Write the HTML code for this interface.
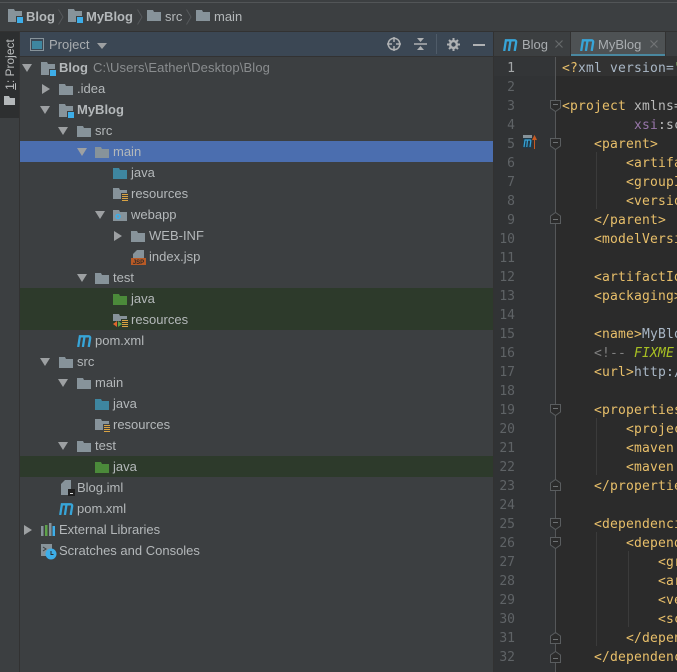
<!DOCTYPE html>
<html><head><meta charset="utf-8">
<style>
html,body{margin:0;padding:0;background:#3c3f41;}
#p{position:relative;width:677px;height:672px;overflow:hidden;background:#3c3f41;font-family:"Liberation Sans",sans-serif;font-size:13px;color:#b4b8ba;}
#p div,#p span.a,#p svg.a{position:absolute;}
.t{white-space:pre;line-height:21px;height:21px;}
.b{font-weight:bold;color:#b4b8ba;}
.c{white-space:pre;font-family:"DejaVu Sans Mono","Liberation Mono",monospace;font-size:13px;letter-spacing:.17px;line-height:19px;height:19px;left:562px;color:#e8bf6a;margin-top:2px;}
.n{left:494px;width:21px;text-align:right;font-family:"DejaVu Sans Mono","Liberation Mono",monospace;font-size:13px;line-height:19px;height:19px;color:#5f6366;margin-top:2px;}
i{font-style:normal;}
</style></head><body>
<div id="p">
<svg width="0" height="0" style="position:absolute">
<defs>
<symbol id="f" viewBox="0 0 14 11"><path d="M0 0H6L7 2H14V11H0Z" fill="#87939a"/></symbol>
<symbol id="fb" viewBox="0 0 14 11"><path d="M0 0H6L7 2H14V11H0Z" fill="#3e86a0"/></symbol>
<symbol id="fg" viewBox="0 0 14 11"><path d="M0 0H6L7 2H14V11H0Z" fill="#4b8a3a"/></symbol>
<symbol id="mod" viewBox="0 0 15 15"><path d="M0 0H6L7 2H14V7H8V13H0Z" fill="#87939a"/><rect x="9" y="8" width="6" height="6" fill="#3daee9"/></symbol>
<symbol id="res" viewBox="0 0 15 15"><path d="M0 0H6L7 2H14V5H8V11H0Z" fill="#87939a"/><path d="M9 6.500H15M9 8.500H15M9 10.500H15M9 12.500H15" stroke="#d9a343" stroke-width="1"/></symbol>
<symbol id="down" viewBox="0 0 10 8"><path d="M0 0H10L5 8Z" fill="#9da0a2"/></symbol>
<symbol id="right" viewBox="0 0 8 10"><path d="M0 0V10L8 5Z" fill="#9da0a2"/></symbol>
<symbol id="fold" viewBox="0 0 11 12"><path d="M.5 .5H10.500V8L5.500 11.500L.5 8Z" fill="#2b2b2b" stroke="#5a5d5f"/><path d="M3 4.500H8" stroke="#6e7173"/></symbol>
<symbol id="foldu" viewBox="0 0 11 12"><path d="M.5 11.500H10.500V4L5.500 .5L.5 4Z" fill="#2b2b2b" stroke="#5a5d5f"/><path d="M3 7.500H8" stroke="#6e7173"/></symbol>
<symbol id="mv" viewBox="0 0 15 12"><path d="M1.200 12L2.900 1.300H11.500Q13.500 1.300 13.100 3.600L11.700 12M7.500 1.500L5.900 12" fill="none" stroke="#37a5d8" stroke-width="2.300"/></symbol>
</defs>
</svg>

<!-- top bar -->
<div style="left:0;top:0;width:677px;height:31px;background:#3c3f41;"></div>
<div style="left:0;top:2px;width:677px;height:1px;background:#525557;"></div>
<div style="left:0;top:31px;width:677px;height:1px;background:#323232;"></div>
<svg class="a" style="left:8px;top:9px" width="15" height="15"><use href="#mod"/></svg>
<div class="t b" style="left:26px;top:6px;">Blog</div>
<svg class="a" style="left:58px;top:9px" width="6" height="16"><path d="M.5 .5L5 8L.5 15.500" fill="none" stroke="#55585a"/></svg>
<svg class="a" style="left:68px;top:9px" width="15" height="15"><use href="#mod"/></svg>
<div class="t b" style="left:86px;top:6px;">MyBlog</div>
<svg class="a" style="left:137px;top:9px" width="6" height="16"><path d="M.5 .5L5 8L.5 15.500" fill="none" stroke="#55585a"/></svg>
<svg class="a" style="left:147px;top:10px" width="14" height="11"><use href="#f"/></svg>
<div class="t" style="left:165px;top:6px;">src</div>
<svg class="a" style="left:186px;top:9px" width="6" height="16"><path d="M.5 .5L5 8L.5 15.500" fill="none" stroke="#55585a"/></svg>
<svg class="a" style="left:196px;top:10px" width="14" height="11"><use href="#f"/></svg>
<div class="t" style="left:214px;top:6px;">main</div>

<!-- side stripe -->
<div style="left:19px;top:32px;width:1px;height:640px;background:#323232;"></div>
<div style="left:0;top:32px;width:19px;height:86px;background:#2d2f30;"></div>
<div class="t" style="left:0;top:32px;width:19px;height:55px;"><span class="a" style="left:-17px;top:22px;width:55px;text-align:center;transform:rotate(-90deg);color:#bbbdbe;font-size:12px;line-height:21px;"><u>1</u>: Project</span></div>
<svg class="a" style="left:4px;top:96px" width="11" height="9"><path d="M0 0H5L6 2H11V9H0Z" fill="#b4b8ba"/></svg>

<!-- project header -->
<div style="left:20px;top:32px;width:473px;height:24px;background:#3b4754;"></div>
<div style="left:20px;top:56px;width:473px;height:1px;background:#323232;"></div>
<svg class="a" style="left:30px;top:38px" width="14" height="13"><rect x=".5" y=".5" width="13" height="12" fill="none" stroke="#87939a"/><rect x="2" y="3" width="10" height="8" fill="#3e86a0"/></svg>
<div class="t" style="left:49px;top:34px;color:#a9adb0;">Project</div>
<svg class="a" style="left:97px;top:43px" width="10" height="6"><path d="M0 0H10L5 6Z" fill="#9da0a2"/></svg>
<svg class="a" style="left:387px;top:37px" width="14" height="14"><circle cx="7" cy="7" r="5.800" fill="none" stroke="#afb1b3" stroke-width="1.500"/><path d="M7 0V5M7 9V14M0 7H5M9 7H14" stroke="#afb1b3" stroke-width="1.500"/></svg>
<svg class="a" style="left:414px;top:37px" width="13" height="14"><path d="M0 7H13" stroke="#afb1b3" stroke-width="1.500"/><path d="M3 1H10L6.500 5ZM3 13H10L6.500 9Z" fill="#afb1b3"/></svg>
<div style="left:436px;top:34px;width:1px;height:20px;background:#4f5b68;"></div>
<svg class="a" style="left:447px;top:38px" width="13" height="13"><circle cx="6.500" cy="6.500" r="3.400" fill="none" stroke="#afb1b3" stroke-width="2.400"/><path d="M6.500 0V3M6.500 10V13M0 6.500H3M10 6.500H13M2 2L4 4M9 9L11 11M11 2L9 4M4 9L2 11" stroke="#afb1b3" stroke-width="2"/></svg>
<div style="left:473px;top:44px;width:12px;height:2px;background:#afb1b3;"></div>

<!-- tree backgrounds -->
<div style="left:20px;top:141px;width:473px;height:21px;background:#4b6eaf;"></div>
<div style="left:20px;top:288px;width:473px;height:42px;background:#2d3a2b;"></div>
<div style="left:20px;top:456px;width:473px;height:21px;background:#2d3a2b;"></div>

<!-- tree rows -->
<svg class="a" style="left:22px;top:64px" width="10" height="8"><use href="#down"/></svg>
<svg class="a" style="left:41px;top:62px" width="15" height="15"><use href="#mod"/></svg>
<div class="t b" style="left:59px;top:57px;">Blog</div>
<div class="t" style="left:93px;top:57px;color:#8a8d8f;letter-spacing:.13px;">C:\Users\Eather\Desktop\Blog</div>

<svg class="a" style="left:42px;top:84px" width="8" height="10"><use href="#right"/></svg>
<svg class="a" style="left:59px;top:84px" width="14" height="11"><use href="#f"/></svg>
<div class="t" style="left:77px;top:78px;">.idea</div>

<svg class="a" style="left:40px;top:106px" width="10" height="8"><use href="#down"/></svg>
<svg class="a" style="left:59px;top:104px" width="15" height="15"><use href="#mod"/></svg>
<div class="t b" style="left:77px;top:99px;">MyBlog</div>

<svg class="a" style="left:58px;top:127px" width="10" height="8"><use href="#down"/></svg>
<svg class="a" style="left:77px;top:126px" width="14" height="11"><use href="#f"/></svg>
<div class="t" style="left:95px;top:120px;">src</div>

<svg class="a" style="left:77px;top:148px" width="10" height="8"><use href="#down"/></svg>
<svg class="a" style="left:95px;top:147px" width="14" height="11"><use href="#f"/></svg>
<div class="t" style="left:113px;top:141px;">main</div>

<svg class="a" style="left:113px;top:168px" width="14" height="11"><use href="#fb"/></svg>
<div class="t" style="left:131px;top:162px;">java</div>

<svg class="a" style="left:113px;top:188px" width="15" height="15"><use href="#res"/></svg>
<div class="t" style="left:131px;top:183px;">resources</div>

<svg class="a" style="left:95px;top:211px" width="10" height="8"><use href="#down"/></svg>
<svg class="a" style="left:113px;top:210px" width="14" height="11"><path d="M0 0H6L7 2H14V11H0Z" fill="#87939a"/><circle cx="5" cy="6.500" r="2" fill="none" stroke="#3daee9" stroke-width="1.500"/></svg>
<div class="t" style="left:131px;top:204px;">webapp</div>

<svg class="a" style="left:114px;top:231px" width="8" height="10"><use href="#right"/></svg>
<svg class="a" style="left:131px;top:231px" width="14" height="11"><use href="#f"/></svg>
<div class="t" style="left:149px;top:225px;">WEB-INF</div>

<svg class="a" style="left:131px;top:250px" width="15" height="15"><path d="M6 0H13V9H2V4Z" fill="#87939a"/><rect x="0" y="8" width="15" height="7" fill="#b85a26"/><text x="7.500" y="14" font-family="Liberation Sans" font-size="6" font-weight="bold" text-anchor="middle" fill="#2b2b2b">JSP</text></svg>
<div class="t" style="left:149px;top:246px;">index.jsp</div>

<svg class="a" style="left:77px;top:274px" width="10" height="8"><use href="#down"/></svg>
<svg class="a" style="left:95px;top:273px" width="14" height="11"><use href="#f"/></svg>
<div class="t" style="left:113px;top:267px;">test</div>

<svg class="a" style="left:113px;top:294px" width="14" height="11"><use href="#fg"/></svg>
<div class="t" style="left:131px;top:288px;">java</div>

<svg class="a" style="left:113px;top:314px" width="15" height="15"><path d="M0 0H6L7 2H14V5H8V7H0Z" fill="#87939a"/><path d="M0 10L4 7V13Z" fill="#e0662c"/><path d="M5 7V13L9 10Z" fill="#5ea34a"/><path d="M9 6.500H15M9 8.500H15M9 10.500H15M9 12.500H15" stroke="#d9a343"/></svg>
<div class="t" style="left:131px;top:309px;">resources</div>

<svg class="a" style="left:77px;top:335px" width="15" height="12"><use href="#mv"/></svg>
<div class="t" style="left:95px;top:330px;">pom.xml</div>

<svg class="a" style="left:40px;top:358px" width="10" height="8"><use href="#down"/></svg>
<svg class="a" style="left:59px;top:357px" width="14" height="11"><use href="#f"/></svg>
<div class="t" style="left:77px;top:351px;">src</div>

<svg class="a" style="left:58px;top:379px" width="10" height="8"><use href="#down"/></svg>
<svg class="a" style="left:77px;top:378px" width="14" height="11"><use href="#f"/></svg>
<div class="t" style="left:95px;top:372px;">main</div>

<svg class="a" style="left:95px;top:399px" width="14" height="11"><use href="#fb"/></svg>
<div class="t" style="left:113px;top:393px;">java</div>

<svg class="a" style="left:95px;top:419px" width="15" height="15"><use href="#res"/></svg>
<div class="t" style="left:113px;top:414px;">resources</div>

<svg class="a" style="left:58px;top:442px" width="10" height="8"><use href="#down"/></svg>
<svg class="a" style="left:77px;top:441px" width="14" height="11"><use href="#f"/></svg>
<div class="t" style="left:95px;top:435px;">test</div>

<svg class="a" style="left:95px;top:462px" width="14" height="11"><use href="#fg"/></svg>
<div class="t" style="left:113px;top:456px;">java</div>

<svg class="a" style="left:61px;top:480px" width="14" height="16"><path d="M4 0H10V15H0V4Z" fill="#87939a"/><rect x="7" y="9" width="7" height="7" fill="#1f1f1f"/><rect x="9" y="13" width="3" height="1" fill="#ddd"/></svg>
<div class="t" style="left:77px;top:477px;">Blog.iml</div>

<svg class="a" style="left:59px;top:503px" width="15" height="12"><use href="#mv"/></svg>
<div class="t" style="left:77px;top:498px;">pom.xml</div>

<svg class="a" style="left:24px;top:525px" width="8" height="10"><use href="#right"/></svg>
<svg class="a" style="left:41px;top:523px" width="14" height="13"><rect x="0" y="3" width="2.500" height="10" fill="#87939a"/><rect x="4" y="2" width="2.500" height="11" fill="#5ea34a"/><rect x="8" y="0" width="2.500" height="13" fill="#87939a"/><rect x="11.500" y="3" width="2.500" height="10" fill="#3daee9"/></svg>
<div class="t" style="left:59px;top:519px;">External Libraries</div>

<svg class="a" style="left:41px;top:544px" width="16" height="16"><rect x="0" y="0" width="11" height="12" fill="#87939a"/><path d="M2 3L5 5L2 7" fill="none" stroke="#3c3f41"/><circle cx="10" cy="10" r="5.500" fill="#3daee9"/><path d="M10 7V10.500H12.500" fill="none" stroke="#2b2b2b"/></svg>
<div class="t" style="left:59px;top:540px;">Scratches and Consoles</div>

<!-- tabs -->
<div style="left:493px;top:32px;width:1px;height:640px;background:#323232;"></div>
<div style="left:494px;top:32px;width:183px;height:24px;background:#3c3f41;"></div>
<div style="left:571px;top:32px;width:94px;height:22px;background:#4e5254;"></div>
<div style="left:571px;top:54px;width:94px;height:3px;background:#4a88a0;"></div>
<div style="left:494px;top:56px;width:183px;height:1px;background:#323232;"></div>
<div style="left:570px;top:32px;width:1px;height:24px;background:#323232;"></div>
<div style="left:665px;top:32px;width:1px;height:24px;background:#323232;"></div>
<svg class="a" style="left:503px;top:39px" width="15" height="12"><use href="#mv"/></svg>
<div class="t" style="left:522px;top:34px;color:#a9adb0;">Blog</div>
<svg class="a" style="left:555px;top:40px" width="8" height="8"><path d="M.5 .5L7.500 7.500M7.500 .5L.5 7.500" stroke="#66696b" stroke-width="1.200"/></svg>
<svg class="a" style="left:580px;top:39px" width="15" height="12"><use href="#mv"/></svg>
<div class="t" style="left:598px;top:34px;color:#a9adb0;">MyBlog</div>
<svg class="a" style="left:650px;top:40px" width="8" height="8"><path d="M.5 .5L7.500 7.500M7.500 .5L.5 7.500" stroke="#717476" stroke-width="1.200"/></svg>

<!-- editor -->
<div style="left:494px;top:57px;width:63px;height:615px;background:#313335;"></div>
<div style="left:556px;top:57px;width:121px;height:615px;background:#2b2b2b;"></div>
<div style="left:494px;top:57px;width:62px;height:19px;background:#333537;"></div>
<div style="left:556px;top:57px;width:121px;height:19px;background:#323232;"></div>
<div style="left:555px;top:57px;width:1px;height:615px;background:#555759;"></div>

<!-- indent guides -->
<div style="left:596px;top:152px;width:1px;height:57px;background:#3b3b3b;"></div>
<div style="left:596px;top:418px;width:1px;height:57px;background:#3b3b3b;"></div>
<div style="left:596px;top:532px;width:1px;height:114px;background:#3b3b3b;"></div>
<div style="left:628px;top:551px;width:1px;height:76px;background:#3b3b3b;"></div>

<!-- fold marks -->
<svg class="a" style="left:550px;top:100px" width="11" height="12"><use href="#fold"/></svg>
<svg class="a" style="left:550px;top:138px" width="11" height="12"><use href="#fold"/></svg>
<svg class="a" style="left:550px;top:212px" width="11" height="12"><use href="#foldu"/></svg>
<svg class="a" style="left:550px;top:404px" width="11" height="12"><use href="#fold"/></svg>
<svg class="a" style="left:550px;top:479px" width="11" height="12"><use href="#foldu"/></svg>
<svg class="a" style="left:550px;top:518px" width="11" height="12"><use href="#fold"/></svg>
<svg class="a" style="left:550px;top:537px" width="11" height="12"><use href="#fold"/></svg>
<svg class="a" style="left:550px;top:632px" width="11" height="12"><use href="#foldu"/></svg>
<svg class="a" style="left:550px;top:651px" width="11" height="12"><use href="#foldu"/></svg>

<!-- maven gutter icon -->
<svg class="a" style="left:523px;top:135px" width="14" height="14"><rect x="0" y="0" width="9" height="3" fill="#87939a"/><rect x="0" y="3" width="9" height="10" fill="#1f3a4a"/><path d="M1 12L2 5H7Q8 5 7.800 6L7 12M4.500 5L3.800 12" fill="none" stroke="#37a5d8" stroke-width="1.200"/><path d="M11.500 14V3M9.500 5L11.500 1L13.500 5" fill="#c75a22" stroke="#c75a22"/></svg>

<!-- line numbers -->
<div class="n" style="top:57px;color:#a4a7a8;">1</div>
<div class="n" style="top:76px;">2</div>
<div class="n" style="top:95px;">3</div>
<div class="n" style="top:114px;">4</div>
<div class="n" style="top:133px;">5</div>
<div class="n" style="top:152px;">6</div>
<div class="n" style="top:171px;">7</div>
<div class="n" style="top:190px;">8</div>
<div class="n" style="top:209px;">9</div>
<div class="n" style="top:228px;">10</div>
<div class="n" style="top:247px;">11</div>
<div class="n" style="top:266px;">12</div>
<div class="n" style="top:285px;">13</div>
<div class="n" style="top:304px;">14</div>
<div class="n" style="top:323px;">15</div>
<div class="n" style="top:342px;">16</div>
<div class="n" style="top:361px;">17</div>
<div class="n" style="top:380px;">18</div>
<div class="n" style="top:399px;">19</div>
<div class="n" style="top:418px;">20</div>
<div class="n" style="top:437px;">21</div>
<div class="n" style="top:456px;">22</div>
<div class="n" style="top:475px;">23</div>
<div class="n" style="top:494px;">24</div>
<div class="n" style="top:513px;">25</div>
<div class="n" style="top:532px;">26</div>
<div class="n" style="top:551px;">27</div>
<div class="n" style="top:570px;">28</div>
<div class="n" style="top:589px;">29</div>
<div class="n" style="top:608px;">30</div>
<div class="n" style="top:627px;">31</div>
<div class="n" style="top:646px;">32</div>

<!-- code -->
<div class="c" style="top:57px;">&lt;?<i style="color:#a9b7c6">xml version</i><i style="color:#a9b7c6">=</i><i style="color:#6a8759">"</i></div>
<div class="c" style="top:95px;">&lt;project <i style="color:#bababa">xmlns=</i></div>
<div class="c" style="top:114px;">         <i style="color:#9876aa">xsi</i><i style="color:#bababa">:sc</i></div>
<div class="c" style="top:133px;">    &lt;parent&gt;</div>
<div class="c" style="top:152px;">        &lt;artifa</div>
<div class="c" style="top:171px;">        &lt;groupI</div>
<div class="c" style="top:190px;">        &lt;versio</div>
<div class="c" style="top:209px;">    &lt;/parent&gt;</div>
<div class="c" style="top:228px;">    &lt;modelVersi</div>
<div class="c" style="top:266px;">    &lt;artifactId</div>
<div class="c" style="top:285px;">    &lt;packaging&gt;</div>
<div class="c" style="top:323px;">    &lt;name&gt;<i style="color:#a9b7c6">MyBlo</i></div>
<div class="c" style="top:342px;color:#808080;">    &lt;!-- <i style="color:#a8c023;font-style:italic">FIXME</i></div>
<div class="c" style="top:361px;">    &lt;url&gt;<i style="color:#a9b7c6">http:/</i></div>
<div class="c" style="top:399px;">    &lt;properties</div>
<div class="c" style="top:418px;">        &lt;projec</div>
<div class="c" style="top:437px;">        &lt;maven.</div>
<div class="c" style="top:456px;">        &lt;maven.</div>
<div class="c" style="top:475px;">    &lt;/properties</div>
<div class="c" style="top:513px;">    &lt;dependencies</div>
<div class="c" style="top:532px;">        &lt;depend</div>
<div class="c" style="top:551px;">            &lt;gr</div>
<div class="c" style="top:570px;">            &lt;ar</div>
<div class="c" style="top:589px;">            &lt;ve</div>
<div class="c" style="top:608px;">            &lt;sc</div>
<div class="c" style="top:627px;">        &lt;/depen</div>
<div class="c" style="top:646px;">    &lt;/dependence</div>
</div>
</body></html>
